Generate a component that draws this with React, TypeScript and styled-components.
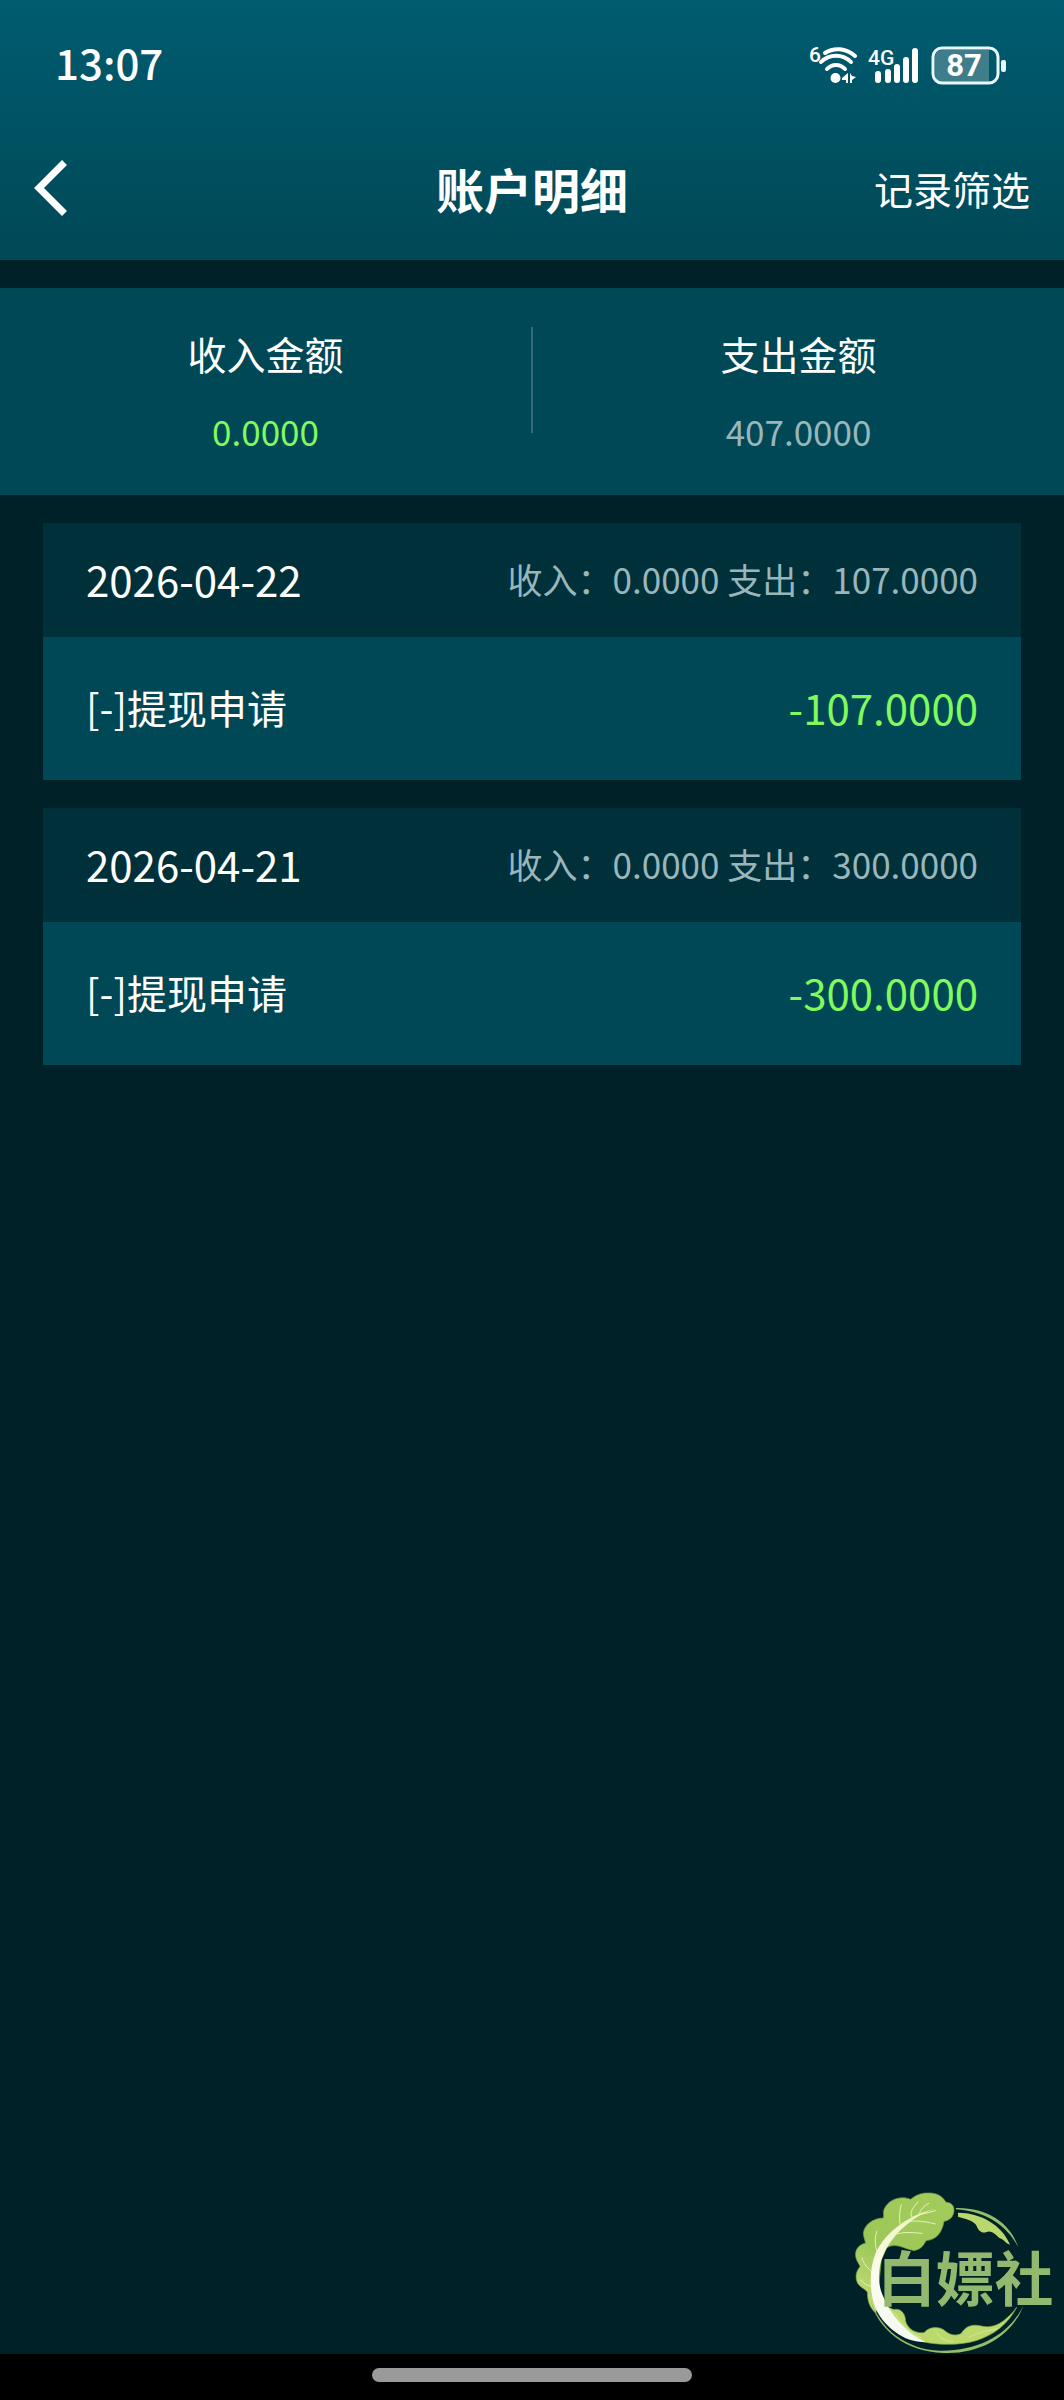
import styled, { createGlobalStyle } from "styled-components";

interface RecordDay {
  date: string;
  income: string;
  expense: string;
  items: { id: number; title: string; amount: string }[];
}

const days: RecordDay[] = [
  {
    date: "2026-04-22",
    income: "0.0000",
    expense: "107.0000",
    items: [{ id: 1, title: "[-]提现申请", amount: "-107.0000" }],
  },
  {
    date: "2026-04-21",
    income: "0.0000",
    expense: "300.0000",
    items: [{ id: 2, title: "[-]提现申请", amount: "-300.0000" }],
  },
];

const GlobalStyle = createGlobalStyle`
  * {
    box-sizing: border-box;
  }

  body {
    margin: 0;
    background: #002127;
    color: #fff;
    font-family: "Noto Sans CJK SC", "Noto Sans", sans-serif;
  }

  h1, h2, p {
    margin: 0;
    font-weight: 400;
  }
`;

const Page = styled.div`
  display: flex;
  flex-direction: column;
  min-height: 100vh;
`;

const Header = styled.header`
  background: linear-gradient(#005c70, #004856);
`;

const StatusBar = styled.div`
  display: flex;
  align-items: center;
  justify-content: space-between;
  height: 120px;
  padding: 4px 58px 0 55px;
`;

const Clock = styled.time`
  font-size: 42px;
  font-weight: 500;
  line-height: 60px;
`;

const StatusIcons = styled.div`
  display: flex;
  align-items: center;
  gap: 11px;
`;

const NavBar = styled.nav`
  display: grid;
  grid-template-columns: 1fr auto 1fr;
  align-items: center;
  height: 140px;
  padding: 0 34px 4px;
`;

const BackButton = styled.button`
  display: flex;
  justify-self: start;
  padding: 0;
  border: 0;
  background: none;
  color: inherit;
  cursor: pointer;
`;

const Title = styled.h1`
  font-size: 48px;
  font-weight: 700;
  line-height: 72px;
`;

const FilterButton = styled.button`
  justify-self: end;
  padding: 0;
  border: 0;
  background: none;
  color: inherit;
  font-family: inherit;
  font-size: 39px;
  line-height: 60px;
  cursor: pointer;
`;

const Main = styled.main`
  position: relative;
  flex: 1;
  padding-top: 28px;
`;

const Summary = styled.section`
  display: flex;
  align-items: flex-start;
  padding: 39px 0 36px;
  background: #004856;
`;

const SummaryItem = styled.div`
  flex: 1;
  text-align: center;
`;

const SummaryLabel = styled.h2`
  font-size: 39px;
  line-height: 52px;
`;

const SummaryValue = styled.p<{ $color: string }>`
  margin-top: 24px;
  color: ${({ $color }) => $color};
  font-size: 35px;
  line-height: 56px;
`;

const Divider = styled.div`
  width: 2px;
  height: 106px;
  background: #33697a;
`;

const RecordList = styled.div`
  display: flex;
  flex-direction: column;
  gap: 28px;
  padding: 28px 43px;
`;

const DayHeader = styled.div`
  display: flex;
  align-items: center;
  justify-content: space-between;
  height: 114px;
  padding: 0 43px 3px;
  background: #00303a;
`;

const DayDate = styled.h2`
  font-size: 42px;
  line-height: 60px;
`;

const DayTotal = styled.p`
  color: #99b6bb;
  font-size: 35px;
  line-height: 56px;
`;

const RecordRow = styled.div`
  display: flex;
  align-items: center;
  justify-content: space-between;
  height: 143px;
  padding: 0 43px 3px;
  background: #004856;
`;

const RecordTitle = styled.span`
  font-size: 40px;
  line-height: 60px;
`;

const Amount = styled.span`
  color: #80fa5c;
  font-size: 42px;
  line-height: 60px;
`;

const Watermark = styled.svg`
  position: absolute;
  right: 0;
  bottom: 0;
`;

const HomeBar = styled.footer`
  display: flex;
  justify-content: center;
  height: 46px;
  padding-top: 14px;
  background: #000;
`;

const HomeHandle = styled.div`
  width: 30%;
  height: 14px;
  border-radius: 7px;
  background: #9a9a9a;
`;

const WifiIcon = () => (
  <svg width="48" height="48" viewBox="0 -8 48 48" fill="none">
    <text
      x="0"
      y="16"
      fill="#fff"
      fontFamily="Roboto, sans-serif"
      fontSize="21"
      fontWeight="500"
    >
      6
    </text>
    <g stroke="#fff" strokeWidth="4" strokeLinecap="round">
      <path d="M16 7C25 1 37 2 46 10" />
      <path d="M12 16C20 7.500 34 7.500 42 16" />
      <path d="M18 23C23 17.500 31 17.500 36 23" />
    </g>
    <circle cx="26.500" cy="32" r="5" fill="#fff" />
    <path d="M39 27V37H37V34H33V32Z M41 27V37H43V34L47 31L43 30Z" fill="#fff" />
  </svg>
);

const SignalIcon = () => (
  <svg width="52" height="48" viewBox="0 -8 52 48">
    <text
      x="0"
      y="19"
      fill="#fff"
      fontFamily="Roboto, sans-serif"
      fontSize="21"
      fontWeight="500"
    >
      4G
    </text>
    <g fill="#fff">
      <rect x="7" y="25" width="6" height="12" rx="3" />
      <rect x="17" y="23" width="6" height="14" rx="3" />
      <rect x="26" y="18" width="6" height="19" rx="3" />
      <rect x="35" y="11" width="6" height="26" rx="3" />
      <rect x="44" y="2" width="6" height="35" rx="3" />
    </g>
  </svg>
);

const BatteryIcon = () => (
  <svg width="75" height="48" viewBox="0 -8 75 48">
    <path d="M12 4H58V36H12Q4 36 4 28V12Q4 4 12 4Z" fill="#407d8b" />
    <rect
      x="2"
      y="2"
      width="65"
      height="35"
      rx="9"
      fill="none"
      stroke="#e8f8fb"
      strokeWidth="3"
    />
    <rect x="70" y="14" width="5" height="12" rx="2" fill="#e8f8fb" />
    <text
      x="33"
      y="30"
      fill="#fff"
      fontFamily="Roboto, sans-serif"
      fontSize="31"
      fontWeight="700"
      textAnchor="middle"
    >
      87
    </text>
  </svg>
);

const BackIcon = () => (
  <svg width="33" height="56" viewBox="0 0 33 56">
    <path d="M30.500 2.500L5 28L30.500 53.500" fill="none" stroke="#fff" strokeWidth="7" />
  </svg>
);

const CabbageLogo = () => (
  <Watermark width="224" height="174" viewBox="0 0 672 522">
    <defs>
      <linearGradient id="leaf" x1="0.800" y1="0" x2="0.200" y2="1">
        <stop offset="0" stopColor="#a3cb5c" />
        <stop offset="0.600" stopColor="#9cc858" />
        <stop offset="1" stopColor="#c6dd7c" />
      </linearGradient>
      <linearGradient id="stem" x1="0" y1="0" x2="0" y2="1">
        <stop offset="0" stopColor="#eef4c0" />
        <stop offset="0.500" stopColor="#fbfcf0" />
        <stop offset="1" stopColor="#f4f8f0" />
      </linearGradient>
    </defs>
    {/* outer leaf */}
    <path
      d="M342 90C342 74 330 67 318 67C306 44 284 38 262 39C242 39 226 46 212 58C186 46 148 56 134 84C128 94 132 106 130 114C100 114 72 134 70 160C70 172 76 182 76 190C54 194 42 214 48 234C50 244 58 252 60 260C46 274 44 300 56 314C64 324 76 328 82 336C82 360 88 384 108 400L124 240L140 204C166 186 190 206 222 212C244 208 252 194 258 182C286 180 306 162 312 124C330 122 342 108 342 90Z"
      fill="url(#leaf)"
      stroke="#6f9a3c"
      strokeWidth="2"
    />
    <g fill="none" stroke="#e9f3b8" strokeWidth="3" strokeLinecap="round">
      <path d="M180 132C178 110 178 94 184 74" />
      <path d="M214 110C210 94 218 84 234 66" />
      <path d="M238 100C242 88 252 78 266 70" />
      <path d="M216 112C238 102 262 100 286 92" />
      <path d="M196 126C226 120 256 124 286 132" />
      <path d="M162 164C194 154 220 158 246 160" />
      <path d="M112 218C104 196 104 176 110 154" />
      <path d="M96 276C80 262 70 250 66 234" />
      <path d="M94 320C80 316 70 310 62 300" />
    </g>
    {/* inner leaf along the bottom */}
    <path
      d="M140 386C152 378 158 392 166 388C182 386 194 400 196 416C196 426 200 432 204 438C214 454 236 460 252 458C266 440 296 438 312 450C326 464 348 470 364 460C378 436 400 432 424 438C446 444 474 438 498 416C510 406 520 396 530 382C506 430 462 466 408 482C360 496 300 496 250 486C204 474 162 440 140 386Z"
      fill="#bcd96e"
      stroke="#7fa646"
      strokeWidth="2"
    />
    <g fill="none" stroke="#e3efa8" strokeWidth="2">
      <path d="M164 398C178 424 200 454 244 474" />
      <path d="M290 458C300 474 320 484 340 486" />
      <path d="M386 474C404 460 440 452 474 446" />
    </g>
    <path
      d="M284 86C224 106 170 152 140 204C116 246 108 300 128 346C152 404 194 456 256 486C200 490 136 446 108 388C86 334 88 266 106 222C128 168 190 110 284 86Z"
      fill="url(#stem)"
    />
    <path
      d="M354 98C420 98 486 134 510 194C496 190 490 176 478 174C464 160 452 150 440 156C424 162 414 150 410 138C402 120 372 116 354 110Z"
      fill="#b9d86c"
    />
    <path
      d="M348 84C438 82 510 126 535 202C500 134 434 94 348 88Z"
      fill="#93bc6b"
    />
    <path
      d="M88 350C120 450 200 508 300 512C420 514 512 460 551 374C520 464 424 524 310 519C200 514 112 454 88 350Z"
      fill="#93bc6b"
    />
    <text x="112" y="364" fill="#93b96f" fontSize="176" fontWeight="700">
      白嫖社
    </text>
  </Watermark>
);

const App = () => {
  return (
    <>
      <GlobalStyle />
      <Page>
        <Header>
          <StatusBar>
            <Clock>13:07</Clock>
            <StatusIcons>
              <WifiIcon />
              <SignalIcon />
              <BatteryIcon />
            </StatusIcons>
          </StatusBar>
          <NavBar>
            <BackButton type="button" aria-label="返回">
              <BackIcon />
            </BackButton>
            <Title>账户明细</Title>
            <FilterButton type="button">记录筛选</FilterButton>
          </NavBar>
        </Header>
        <Main>
          <Summary>
            <SummaryItem>
              <SummaryLabel>收入金额</SummaryLabel>
              <SummaryValue $color="#80fa5c">0.0000</SummaryValue>
            </SummaryItem>
            <Divider />
            <SummaryItem>
              <SummaryLabel>支出金额</SummaryLabel>
              <SummaryValue $color="#99b6bb">407.0000</SummaryValue>
            </SummaryItem>
          </Summary>
          <RecordList>
            {days.map((day) => (
              <section key={day.date}>
                <DayHeader>
                  <DayDate>{day.date}</DayDate>
                  <DayTotal>
                    收入：{day.income} 支出：{day.expense}
                  </DayTotal>
                </DayHeader>
                {day.items.map((item) => (
                  <RecordRow key={item.id}>
                    <RecordTitle>{item.title}</RecordTitle>
                    <Amount>{item.amount}</Amount>
                  </RecordRow>
                ))}
              </section>
            ))}
          </RecordList>
          <CabbageLogo />
        </Main>
        <HomeBar>
          <HomeHandle />
        </HomeBar>
      </Page>
    </>
  );
};

export default App;
